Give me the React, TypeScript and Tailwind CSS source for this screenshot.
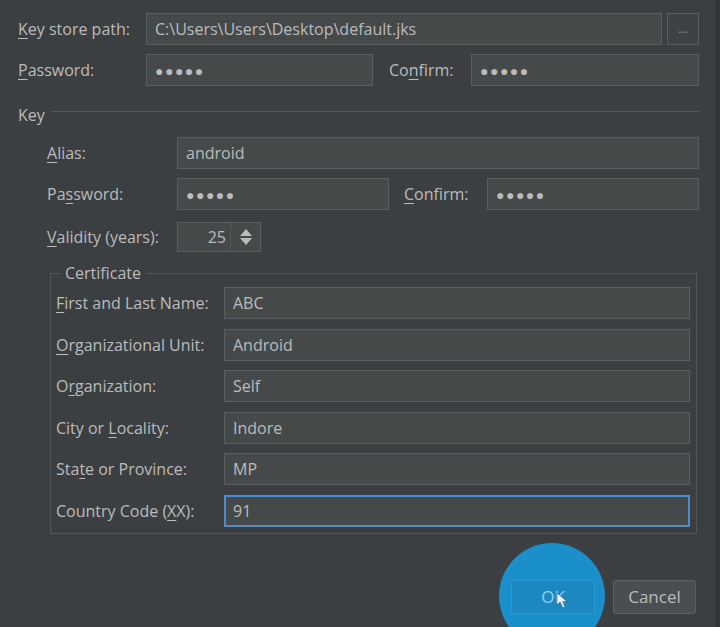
import React from "react";

const font = { fontFamily: '"Open Sans", "Liberation Sans", sans-serif' };

// label with one underlined mnemonic letter
function Mn({ before = "", m, after = "" }: { before?: string; m: string; after?: string }) {
  return (
    <span>
      {before}
      <span className="underline underline-offset-[3px] decoration-1">{m}</span>
      {after}
    </span>
  );
}

function Field({
  value,
  className = "",
  focused = false,
}: {
  value: React.ReactNode;
  className?: string;
  focused?: boolean;
}) {
  return (
    <div
      className={
        "h-8 flex items-center bg-[#45494a] text-[#bbbbbb] " +
        (focused
          ? "border-2 border-[#4f8ccb] px-[7px] "
          : "border border-[#5b5e60] px-[8px] ") +
        className
      }
    >
      {value}
    </div>
  );
}

function Dots() {
  return <span className="tracking-[1.5px] text-[14px]">●●●●●</span>;
}

const certRows = [
  { label: <Mn m="F" after="irst and Last Name:" />, value: "ABC" },
  { label: <Mn m="O" after="rganizational Unit:" />, value: "Android" },
  { label: <Mn before="O" m="r" after="ganization:" />, value: "Self" },
  { label: <Mn before="City or " m="L" after="ocality:" />, value: "Indore" },
  { label: <Mn before="Sta" m="t" after="e or Province:" />, value: "MP" },
  { label: <Mn before="Country Code (" m="X" after="X):" />, value: "91", focused: true },
];

export default function App() {
  return (
    <div
      style={font}
      className="relative w-[720px] h-[627px] overflow-hidden bg-[#3c3f41] text-[16px] text-[#bbbbbb]"
    >
      <div className="absolute right-0 top-0 bottom-0 w-[5px] bg-[#323436]" />

      <div className="pl-[18px] pr-[21px] pt-[13px]">
        {/* KEY STORE */}
        <div className="flex items-center h-8">
          <div className="w-[128px]">
            <Mn m="K" after="ey store path:" />
          </div>
          <Field value="C:\Users\Users\Desktop\default.jks" className="flex-1" />
          <div className="ml-[5px] w-[32px] h-8 flex items-center justify-center border border-[#5b5e60] bg-[#3f4244] text-[12px] text-[#999999]">
            ...
          </div>
        </div>

        <div className="flex items-center h-8 mt-[9px]">
          <div className="w-[128px]">
            <Mn m="P" after="assword:" />
          </div>
          <Field value={<Dots />} className="w-[227px]" />
          <div className="ml-[16px] w-[82px]">
            <Mn before="Co" m="n" after="firm:" />
          </div>
          <Field value={<Dots />} className="flex-1" />
        </div>

        {/* KEY */}
        <div className="flex items-center mt-[17px] h-6">
          <span>Key</span>
          <div className="flex-1 ml-[6px] -mt-[8px] h-px bg-[#55585a]" />
        </div>

        <div className="pl-[29px]">
          <div className="flex items-center h-8 mt-[10px]">
            <div className="w-[130px]">
              <Mn m="A" after="lias:" />
            </div>
            <Field value="android" className="flex-1" />
          </div>

          <div className="flex items-center h-8 mt-[9px]">
            <div className="w-[130px]">
              <Mn before="Pa" m="s" after="sword:" />
            </div>
            <Field value={<Dots />} className="w-[212px]" />
            <div className="ml-[15px] w-[83px]">
              <Mn m="C" after="onfirm:" />
            </div>
            <Field value={<Dots />} className="flex-1" />
          </div>

          <div className="flex items-center h-[30px] mt-[12px]">
            <div className="w-[130px]">
              <Mn m="V" after="alidity (years):" />
            </div>
            <div className="w-[84px] h-[30px] flex items-center bg-[#45494a] border border-[#5b5e60]">
              <div className="flex-1 text-right pr-[4px]">25</div>
              <div className="w-px h-full bg-[#55585a]" />
              <div className="w-[29px] flex items-center justify-center">
                <svg width="14" height="20" viewBox="0 0 14 20">
                  <path d="M7 2 L13 9 H1 Z" fill="#bbbbbb" />
                  <path d="M7 18 L13 11 H1 Z" fill="#bbbbbb" />
                </svg>
              </div>
            </div>
          </div>
        </div>

        {/* CERTIFICATE */}
        <fieldset className="ml-[32px] mr-[2px] mt-[13px] border border-[#55585a] pl-[5px] pr-[6px] pb-[6px]">
          <legend className="ml-[4px] px-[5px] leading-[16px]">Certificate</legend>
          <div className="flex flex-col gap-[9.5px] mt-[6px]">
            {certRows.map((r, i) => (
              <div key={i} className="flex items-center h-8">
                <div className="w-[168px]">{r.label}</div>
                <Field value={r.value} focused={r.focused} className="flex-1" />
              </div>
            ))}
          </div>
        </fieldset>

        {/* BUTTONS */}
        <div className="flex justify-end gap-[18px] mt-[46px] pr-[3px]">
          <div className="relative w-[84px] h-[34px]">
            <div className="absolute left-[-12px] top-[-37px] w-[106px] h-[106px] rounded-full bg-[#1a8fca]" />
            <div className="absolute inset-0 flex items-center justify-center border border-[#2a9ad6] bg-[#1b88c2] rounded-[2px] text-[#8ed1f2] text-[17px]">
              OK
            </div>
            <svg
              className="absolute left-[45px] top-[12px]"
              width="14"
              height="18"
              viewBox="0 0 14 18"
            >
              <path d="M1 1 L1 13 L4 10 L7 16 L9 15 L6.5 9.5 L11 9.5 Z" fill="#ffffff" stroke="#2a6b8f" strokeWidth="0.8" />
            </svg>
          </div>
          <div className="w-[83px] h-[34px] flex items-center justify-center bg-[#4a4e50] border border-[#5e6163] rounded-[3px] text-[17px]">
            Cancel
          </div>
        </div>
      </div>
    </div>
  );
}
